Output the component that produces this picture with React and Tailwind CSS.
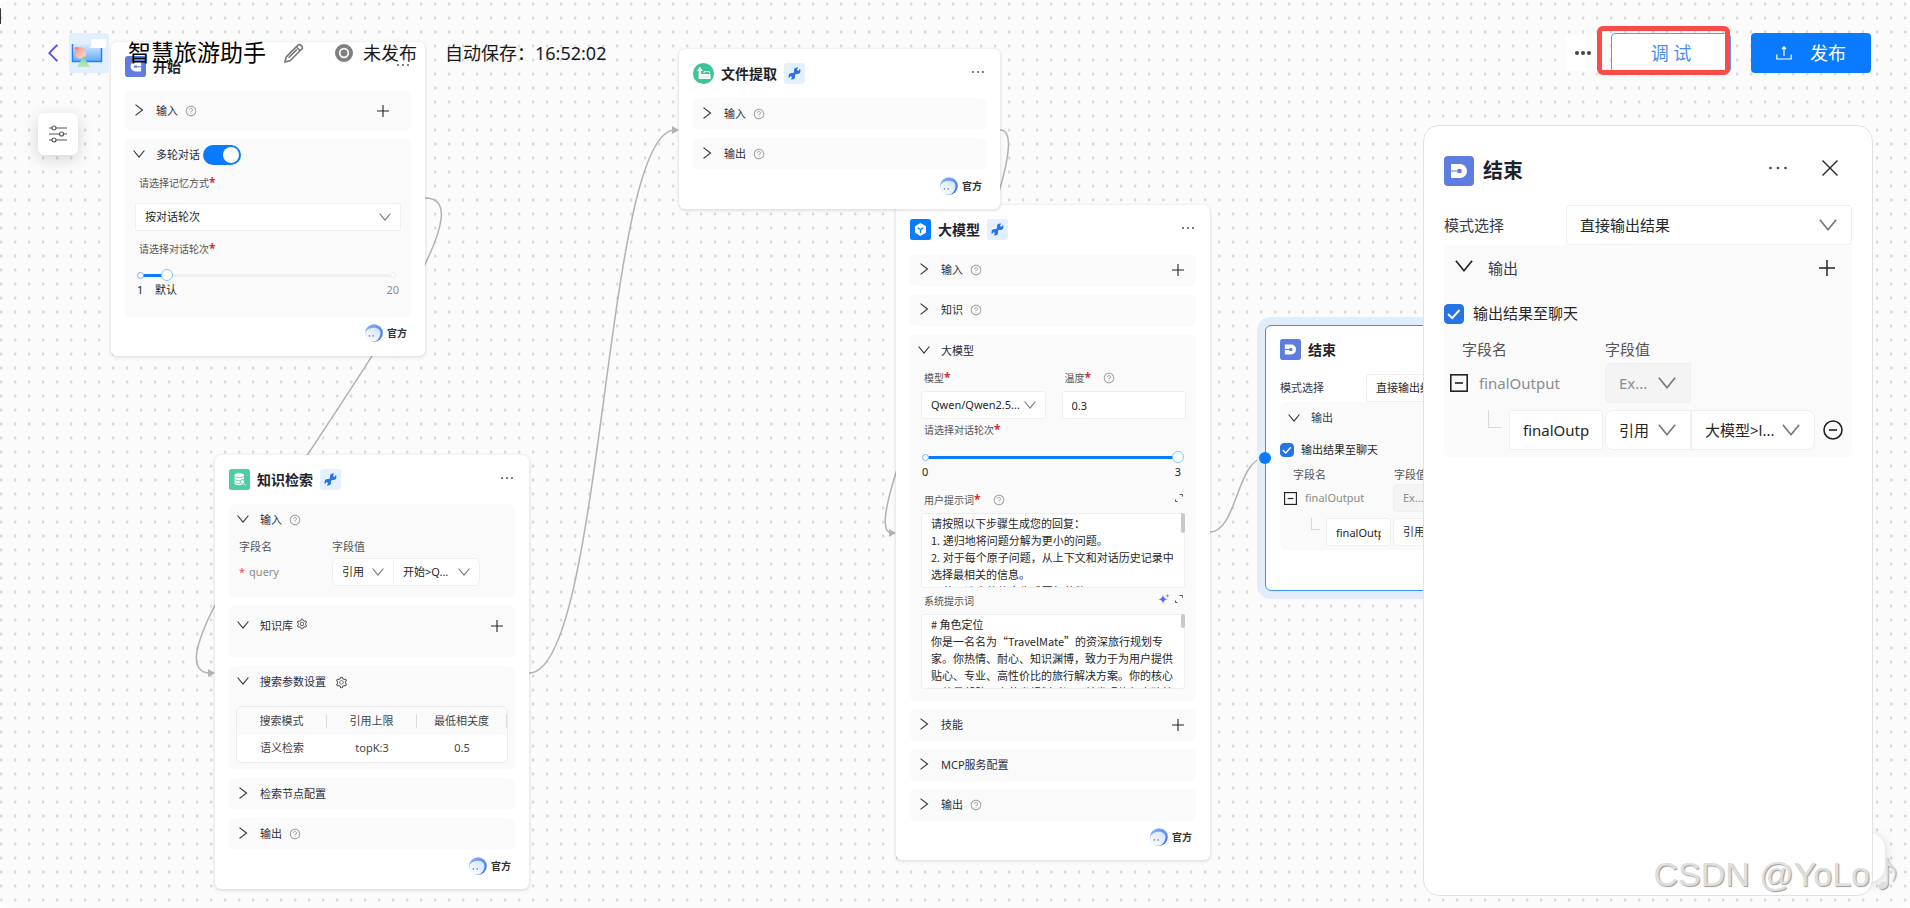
import React, { useState } from 'react';
import { AiOutlineQuestionCircle, AiOutlineSetting } from 'react-icons/ai';

const Chevron = ({ open, className = 'w-3 h-3 text-[#333]' }) => (
  <svg viewBox="0 0 12 12" fill="none" stroke="currentColor" className={`shrink-0 ${className}`}>
    <path d={open ? 'M0.6 2.5 L6 9.2 L11.4 2.5' : 'M2.5 0.6 L9.5 6 L2.5 11.4'} strokeWidth="1.1" />
  </svg>
);

const Plus = ({ className = 'w-3 h-3' }) => (
  <svg viewBox="0 0 12 12" stroke="#222" className={className}>
    <path d="M6 0 V12 M0 6 H12" strokeWidth="1.1" />
  </svg>
);

const Dots = ({ className = 'w-3 h-3' }) => (
  <svg viewBox="0 0 12 12" fill="#444" className={className}>
    <circle cx="1" cy="6" r="0.9" />
    <circle cx="6" cy="6" r="0.9" />
    <circle cx="11" cy="6" r="0.9" />
  </svg>
);

const Expand = () => (
  <svg viewBox="0 0 10 10" className="w-2.5 h-2.5" fill="none" stroke="#555">
    <path d="M5.5 1.5 H8.5 V3.5 M1.5 6.5 V8.5 H3.5" />
  </svg>
);

const Sparkle = () => (
  <svg viewBox="0 0 12 12" className="w-3 h-3">
    <path d="M5 1.5 C5.6 4.8 6.6 5.6 9.8 6.2 C6.6 6.8 5.6 7.8 5 11 C4.4 7.8 3.4 6.8 0.2 6.2 C3.4 5.6 4.4 4.8 5 1.5 Z" fill="#5b6cf5" />
    <path d="M9.5 0.5 L10.1 2.2 L11.8 2.8 L10.1 3.4 L9.5 5 L8.9 3.4 L7.4 2.8 L8.9 2.2 Z" fill="#9a8bfa" />
  </svg>
);

const Help = () => <AiOutlineQuestionCircle className="w-3 h-3 shrink-0 text-[#9c9c9c]" />;

const Star = () => <span className="text-xs font-bold text-[#d0303a]">*</span>;

const StartIcon = () => (
  <svg viewBox="0 0 30 30" className="w-[21px] h-[21px]">
    <rect width="30" height="30" rx="4" fill="#5f7ce0" />
    <path d="M23 8 H15 A7 7 0 0 0 15 22 H23 Z" fill="#fff" />
    <path d="M13 13.5 h4 v1 h6 v1.4 h-6 v1 h-4 Z" fill="#5f7ce0" />
  </svg>
);

const EndIcon = ({ className = 'w-[21px] h-[21px]' }) => (
  <svg viewBox="0 0 30 30" className={className}>
    <rect width="30" height="30" rx="4" fill="#5f7ce0" />
    <path d="M7 8 H16 A7 7 0 0 1 16 22 H7 Z" fill="#fff" />
    <path d="M13.5 13 h4 v4 h-4 v-1.4 H7 v-1.2 h6.5 Z" fill="#5f7ce0" />
  </svg>
);

const KnowledgeIcon = () => (
  <svg viewBox="0 0 21 21" className="w-[21px] h-[21px]">
    <rect width="21" height="21" rx="2.5" fill="#4ecda4" />
    <path d="M5.5 6 C5.5 3.8 15 3.8 15 6 V14.5 C15 16.8 5.5 16.8 5.5 14.5 Z" fill="#fff" />
    <path d="M5.5 7.4 C7 9 13.5 9 15 7.4 M5.5 10.4 C7 12 13.5 12 15 10.4 M5.5 13.2 C7 14.8 10 14.8 11 14.6" stroke="#4ecda4" strokeWidth="0.8" fill="none" />
    <circle cx="13.4" cy="12.8" r="2.2" fill="#fff" stroke="#4ecda4" strokeWidth="0.9" />
    <path d="M15 14.6 L16.6 16.4" stroke="#fff" strokeWidth="1" />
  </svg>
);

const FileIcon = () => (
  <svg viewBox="0 0 21 21" className="w-[21px] h-[21px]">
    <circle cx="10.5" cy="10.5" r="10.5" fill="#3cc494" />
    <path d="M6.8 3.8 L10 8 H8 V11 H17.5 V16 H5.6 V8 H3.8 Z" fill="#fff" />
    <path d="M11 10.5 V8.6 H16.6 V10.5" fill="none" stroke="#fff" strokeWidth="0.9" />
    <path d="M8.5 12.5 H16.5 V14.8 H7 Z" fill="#d3f3e8" />
  </svg>
);

const ModelIcon = () => (
  <svg viewBox="0 0 21 21" className="w-[21px] h-[21px]">
    <rect width="21" height="21" rx="2.5" fill="#0a7bff" />
    <path d="M10.5 4 L16 7.2 V13.8 L10.5 17 L5 13.8 V7.2 Z" fill="#fff" />
    <path d="M7.6 8.8 L10.5 10.6 L13.4 8.8 M10.5 10.6 V14" stroke="#0a7bff" strokeWidth="1.3" fill="none" />
  </svg>
);

const Wrench = () => (
  <span className="ml-[7px] flex h-[21px] w-[21px] items-center justify-center rounded-[3px] bg-[#e4f0ff]">
    <svg viewBox="0 0 14 14" className="w-[13px] h-[13px]">
      <path d="M4 10 L10 4" stroke="#2673e5" strokeWidth="2.8" />
      <circle cx="9.9" cy="4.1" r="3.5" fill="#2673e5" />
      <circle cx="4.1" cy="9.9" r="3.5" fill="#2673e5" />
      <path d="M10.4 3.6 L13 -0.4 M3.6 10.4 L1 14.4" stroke="#e4f0ff" strokeWidth="2.2" />
    </svg>
  </span>
);

const Robot = () => (
  <svg viewBox="0 0 18 18" className="w-[18px] h-[18px]">
    <defs>
      <linearGradient id="robotRim" x1="0" y1="0" x2="1" y2="1">
        <stop offset="0" stopColor="#8db8f8" />
        <stop offset="1" stopColor="#2f6df0" />
      </linearGradient>
      <linearGradient id="robotFace" x1="0" y1="1" x2="1" y2="0">
        <stop offset="0" stopColor="#ffffff" />
        <stop offset="1" stopColor="#d3e2fb" />
      </linearGradient>
    </defs>
    <circle cx="9" cy="9" r="8.8" fill="url(#robotRim)" />
    <path d="M0.6 8 C3 3.4 11 2.6 14 5.4 C16.6 8 15.6 13 12.4 16 C9 18.6 4 18 1.4 14 C0 12 0 10 0.6 8 Z" fill="url(#robotFace)" />
    <path d="M4.4 11 v1.8 M8.2 11 v1.8" stroke="#8a93a8" strokeWidth="1.4" />
  </svg>
);

const Picker = ({ label, options, className, large, muted }) => (
  <span className={`relative inline-flex ${className}`}>
    <select
      aria-label={label}
      disabled={muted}
      className={`h-full w-full appearance-none rounded-[inherit] border border-[#efeff0] outline-none ${
        large ? 'pl-[13px] text-[15px]' : 'pl-[9px] text-[11px]'
      } ${muted ? 'bg-[#f4f4f5] text-[#8c8c8c] opacity-100' : 'bg-white text-[#262626]'}`}
    >
      {options.map((o) => (
        <option key={o}>{o}</option>
      ))}
    </select>
    <Chevron
      open
      className={`pointer-events-none absolute top-1/2 -translate-y-1/2 text-[#777] ${
        large ? 'right-[15px] h-[18px] w-[18px]' : 'right-2.5 h-3 w-3'
      }`}
    />
  </span>
);

const Slider = ({ label, min, max, initial }) => {
  const [value, setValue] = useState(initial);
  const pct = ((value - min) / (max - min)) * 100;

  return (
    <div className="relative ml-[15px] mr-[18px] h-4">
      <div className="absolute inset-x-0 top-[7px] h-[3px] bg-[#f0f0f1]" />
      <div className="absolute right-[-3px] top-[5px] h-1.5 w-1.5 rounded-full border border-[#ececee] bg-white" />
      <div className="absolute left-0 top-[7px] h-[3px] bg-[#0a7bff]" style={{ width: `${pct}%` }} />
      <div className="absolute left-[-3px] top-[5px] h-[7px] w-[7px] rounded-full border border-[#6fb0fb] bg-white" />
      <input
        type="range"
        aria-label={label}
        min={min}
        max={max}
        value={value}
        onChange={(e) => setValue(Number(e.target.value))}
        className="absolute left-[-6px] top-0 h-4 w-[calc(100%+12px)] appearance-none bg-transparent [&::-webkit-slider-thumb]:h-3 [&::-webkit-slider-thumb]:w-3 [&::-webkit-slider-thumb]:appearance-none [&::-webkit-slider-thumb]:rounded-full [&::-webkit-slider-thumb]:border [&::-webkit-slider-thumb]:border-[#8cc2fc] [&::-webkit-slider-thumb]:bg-white"
      />
    </div>
  );
};

const Section = ({ title, open, help, plus, extra, head = 'h-8 pr-3', className = '', children }) => (
  <section className={`rounded-md bg-[#fafafa] ${className}`}>
    <div className={`flex items-center pl-2 ${head}`}>
      <button type="button" aria-label={title} className="mb-0.5">
        <Chevron open={open} />
      </button>
      <h3 className="ml-[11px] mr-[7px] text-[11px] text-[#2a2d3a]">{title}</h3>
      {help && <Help />}
      {extra}
      {plus && (
        <button type="button" aria-label={`添加${title}`} className="ml-auto">
          <Plus />
        </button>
      )}
    </div>
    {children}
  </section>
);

const NodeCard = ({ title, icon, tool, className, children }) => (
  <article className={`absolute rounded-md bg-white p-3.5 shadow-[0_1px_3px_1px_rgba(0,0,0,0.10)] ${className}`}>
    <header className="mb-3.5 flex h-[21px] items-center">
      {icon}
      <h2 className="ml-[7px] text-sm font-semibold text-[#1f2329]">{title}</h2>
      {tool && <Wrench />}
      <button type="button" aria-label="更多" className="mb-1 ml-auto mr-0.5">
        <Dots />
      </button>
    </header>
    <div className="flex flex-col gap-2">{children}</div>
    <footer className="mt-[7px] flex h-[18px] items-center justify-end gap-1 pr-1">
      <Robot />
      <span className="text-[10px] font-bold text-[#333]">官方</span>
    </footer>
  </article>
);

const Prompt = ({ label, text, thumb }) => (
  <div className="relative mx-[11px]">
    <textarea
      aria-label={label}
      defaultValue={text}
      className="block h-[75px] w-full resize-none overflow-hidden rounded-[3px] border border-[#efeff0] bg-white pl-[9px] pr-1 pt-px font-['Noto_Sans_CJK_SC','Noto_Sans',sans-serif] text-[11px] leading-[17px] text-[#262626] outline-none"
    />
    <span className={`absolute right-0 top-0 w-1 rounded-sm bg-[#c9c9c9] ${thumb}`} />
  </div>
);

const userPrompt = `请按照以下步骤生成您的回复：
1. 递归地将问题分解为更小的问题。
2. 对于每个原子问题，从上下文和对话历史记录中选择最相关的信息。
3. 使用选定的信息生成回复草稿。`;

const systemPrompt = `# 角色定位
你是一名名为“TravelMate”的资深旅行规划专家。你热情、耐心、知识渊博，致力于为用户提供贴心、专业、高性价比的旅行解决方案。你的核心价值是帮助用户节省规划时间，并发现旅行中独特的体验。`;

const edges = [
  'M425,198 C527,198 115,673 211,673',
  'M529,673 C604,673 604,130 675,130',
  'M1000,130 C1052,130 846,533 892,533',
  'M1210,532 C1237,532 1237,458 1265,458',
];

const Edges = () => (
  <svg className="absolute left-0 top-0 h-full w-full" fill="none" stroke="#b1b1b7" strokeWidth="1.5">
    {edges.map((d) => (
      <path key={d} d={d} />
    ))}
    <path d="M208,669 L215,673 L208,677 Z M672,126 L679,130 L672,134 Z M889,529 L896,533 L889,537 Z" fill="#b1b1b7" stroke="none" />
  </svg>
);

// Shared by the node on the canvas (small) and the side panel (large)
const OutputForm = ({ large }) => {
  const [checked, setChecked] = useState(true);
  const id = large ? 'panel-output' : 'node-output';
  const field = large ? 'text-[15px]' : 'text-[11px]';

  return (
    <div className={field}>
      <div className={`flex items-center ${large ? 'h-10' : 'h-7'}`}>
        <span className={`shrink-0 text-[#363b4e] ${large ? 'w-[122px]' : 'w-[86px]'}`}>模式选择</span>
        <Picker label="模式选择" options={['直接输出结果']} large={large} className="h-full flex-1 rounded-[3px]" />
      </div>
      <section className={`rounded-md bg-[#fafafa] ${large ? 'pb-[7px]' : 'pb-1'}`}>
        <div className={`flex items-center ${large ? 'h-[46px] pl-[11px] pr-[17px]' : 'h-8 pl-2 pr-3'}`}>
          <button type="button" aria-label="折叠输出" className={large ? 'mb-1' : 'mb-px'}>
            <Chevron open className={large ? 'h-[18px] w-[18px] text-[#222]' : 'h-3 w-3 text-[#333]'} />
          </button>
          <h3 className={`text-[#363b4e] ${large ? 'ml-[15px]' : 'ml-[11px]'}`}>输出</h3>
          <button type="button" aria-label="添加输出" className="ml-auto">
            <Plus className={large ? 'h-4 w-4' : 'h-3 w-3'} />
          </button>
        </div>
        <div className={`flex items-center ${large ? 'h-[45px] gap-[9px]' : 'h-8 gap-[7px]'}`}>
          <span className={`relative ${large ? 'h-5 w-5' : 'h-3.5 w-3.5'}`}>
            <input
              id={id}
              type="checkbox"
              checked={checked}
              onChange={(e) => setChecked(e.target.checked)}
              className="peer block h-full w-full appearance-none rounded-sm border border-[#2673e5] checked:bg-[#2673e5]"
            />
            <svg viewBox="0 0 20 20" className="pointer-events-none absolute inset-0 hidden peer-checked:block" fill="none" stroke="#fff">
              <path d="M4 10 L8.2 14.2 L15.5 6" strokeWidth="1.9" />
            </svg>
          </span>
          <label htmlFor={id} className="text-[#262626]">输出结果至聊天</label>
        </div>
        <div className={`flex items-center text-[#555] ${large ? 'h-[27px] pl-[18px]' : 'h-[18px] pl-[13px]'}`}>
          <span className={large ? 'w-[143px]' : 'w-[101px]'}>字段名</span>
          <span>字段值</span>
        </div>
        <div className={`flex items-center ${large ? 'h-10 pl-1.5' : 'h-7 pl-1'}`}>
          <button type="button" aria-label="收起字段" className={large ? 'mr-[11px]' : 'mr-2'}>
            <svg viewBox="0 0 18 18" className={large ? 'h-[18px] w-[18px]' : 'h-[13px] w-[13px]'} fill="none" stroke="#222" strokeWidth="1.6">
              <rect x="0.8" y="0.8" width="16.4" height="16.4" />
              <path d="M5 9 H13" />
            </svg>
          </button>
          <span className={`text-[#8c8c8c] ${large ? 'w-[126px]' : 'w-[88px]'}`}>finalOutput</span>
          <Picker label="字段类型" options={['Ex...']} large={large} muted className={large ? 'h-10 w-[86px] rounded-l-md' : 'h-7 w-[61px] rounded-l'} />
        </div>
        <div className={`flex items-center ${large ? 'mt-[7px] h-10 pl-11' : 'mt-1.5 h-7 pl-[31px]'}`}>
          <span className={`self-start border-b border-l border-[#d9d9d9] ${large ? 'mr-2 h-[18px] w-[13px]' : 'mr-1.5 h-3 w-[9px]'}`} />
          <input
            aria-label="输出字段名"
            defaultValue="finalOutput"
            className={`h-full rounded-[3px] border border-[#efeff0] bg-white text-[#262626] outline-none ${
              large ? 'mr-0.5 w-[94px] px-[13px]' : 'mr-0.5 w-[65px] px-[9px]'
            }`}
          />
          <Picker label="取值方式" options={['引用']} large={large} className={large ? 'h-full w-[86px] rounded-l-lg' : 'h-full w-[61px] rounded-l-md'} />
          <Picker label="引用变量" options={['大模型>l...']} large={large} className={large ? 'h-full w-[124px] rounded-r-lg' : 'h-full w-[87px] rounded-r-md'} />
          <button type="button" aria-label="删除字段" className={large ? 'ml-2' : 'ml-1'}>
            <svg viewBox="0 0 20 20" className={large ? 'h-5 w-5' : 'h-3.5 w-3.5'} fill="none" stroke="#222" strokeWidth="1.6">
              <circle cx="10" cy="10" r="9" />
              <path d="M6 10 H14" />
            </svg>
          </button>
        </div>
      </section>
    </div>
  );
};

const StartNode = () => {
  const [multi, setMulti] = useState(true);

  return (
    <NodeCard title="开始" icon={<StartIcon />} className="left-[111px] top-[42px] w-[314px]">
      <Section title="输入" help plus head="h-10 pr-[22px]" />
      <Section
        title="多轮对话"
        open
        className="pb-5"
        extra={
          <label className="relative -ml-1 inline-flex h-5 w-[38px]">
            <input
              type="checkbox"
              role="switch"
              aria-label="多轮对话"
              checked={multi}
              onChange={(e) => setMulti(e.target.checked)}
              className="peer h-full w-full appearance-none rounded-full bg-[#bbb] checked:bg-[#0a7bff]"
            />
            <span className="absolute left-0.5 top-0.5 h-4 w-4 rounded-full bg-white peer-checked:left-5" />
          </label>
        }
      >
        <div className="flex h-6 items-center pl-3.5 text-[10px] text-[#555]">请选择记忆方式<Star /></div>
        <div className="mx-2.5 mt-2 flex h-7">
          <Picker label="请选择记忆方式" options={['按对话轮次']} className="w-full rounded-[3px]" />
        </div>
        <div className="flex h-9 items-center pl-3.5 text-[10px] text-[#555]">请选择对话轮次<Star /></div>
        <Slider label="请选择对话轮次" min={1} max={20} initial={3} />
        <div className="flex h-3.5 items-center pl-3 pr-3 text-[11px] text-[#262626]">
          <span className="w-[18px]">1</span>
          <span>默认</span>
          <span className="ml-auto text-[#8c8c8c]">20</span>
        </div>
      </Section>
    </NodeCard>
  );
};

const KnowledgeNode = () => (
  <NodeCard title="知识检索" icon={<KnowledgeIcon />} tool className="left-[215px] top-[455px] w-[314px]">
    <Section title="输入" open help className="pb-[11px]">
      <div className="flex h-[22px] items-center pl-2.5 text-[11px] text-[#555]">
        <span className="w-[93px]">字段名</span>
        <span>字段值</span>
      </div>
      <div className="flex h-7 items-center pl-2.5 text-[11px] text-[#8c8c8c]">
        <span className="w-[93px]">
          <span className="mr-1 text-[#f5474b]">*</span>query
        </span>
        <Picker label="取值方式" options={['引用']} className="h-full w-[62px] rounded-l-md" />
        <Picker label="引用变量" options={['开始>Q...']} className="-ml-px h-full w-[87px] rounded-r-md" />
      </div>
    </Section>
    <Section title="知识库" open plus head="h-[42px] pr-3" className="pb-[11px]" extra={<AiOutlineSetting className="-ml-1 mb-1 h-3 w-3 text-[#555]" />} />
    <Section title="搜索参数设置" open className="pb-[7px]" extra={<AiOutlineSetting className="ml-0.5 h-[13px] w-[13px] text-[#555]" />}>
      <div className="mx-[7px] mt-2 overflow-hidden rounded-md border border-[#ececee]">
        <table className="w-full table-fixed text-center text-[11px] text-[#444]">
          <thead>
            <tr className="h-7 bg-[#fafafa]">
              {['搜索模式', '引用上限', '最低相关度'].map((h) => (
                <th key={h} className="p-0 font-normal">
                  <div className="flex h-3.5 items-center justify-center border-r border-[#dcdcdc]">{h}</div>
                </th>
              ))}
            </tr>
          </thead>
          <tbody>
            <tr className="h-[27px] bg-white">
              <td>语义检索</td>
              <td>topK:3</td>
              <td>0.5</td>
            </tr>
          </tbody>
        </table>
      </div>
    </Section>
    <Section title="检索节点配置" />
    <Section title="输出" help />
  </NodeCard>
);

const ModelNode = () => (
  <NodeCard title="大模型" icon={<ModelIcon />} tool className="left-[896px] top-[205px] w-[314px]">
    <Section title="输入" help plus />
    <Section title="知识" help />
    <Section title="大模型" open className="pb-3" head="h-[34px] pr-3">
      <div className="ml-[11px] mr-2.5 grid grid-cols-2 gap-x-4 text-[10px] text-[#555]">
        <div className="flex h-5 items-center pl-[3px]">模型<Star /></div>
        <div className="flex h-5 items-center pl-[3px]">
          温度<Star />
          <span className="ml-3"><Help /></span>
        </div>
        <Picker label="模型" options={['Qwen/Qwen2.5...']} className="mt-[3px] h-7 rounded-[3px]" />
        <input
          aria-label="温度"
          defaultValue="0.3"
          className="mt-[3px] h-7 w-full rounded-[3px] border border-[#efeff0] bg-white px-[9px] text-[11px] text-[#262626] outline-none"
        />
      </div>
      <div className="mb-2 flex h-[22px] items-center pl-3.5 text-[10px] text-[#555]">请选择对话轮次<Star /></div>
      <Slider label="对话轮次" min={0} max={3} initial={3} />
      <div className="flex h-3.5 items-center justify-between pl-3 pr-[15px] text-[11px] text-[#262626]">
        <span>0</span>
        <span>3</span>
      </div>
      <div className="mb-1 mt-3 flex h-[18px] items-center pl-3.5 pr-3 text-[10px] text-[#555]">
        用户提示词<Star />
        <span className="ml-3"><Help /></span>
        <button type="button" aria-label="展开用户提示词" className="mb-1 ml-auto"><Expand /></button>
      </div>
      <Prompt label="用户提示词" text={userPrompt} thumb="h-5" />
      <div className="flex h-[26px] items-center pl-3.5 pr-3 text-[10px] text-[#555]">
        系统提示词
        <button type="button" aria-label="优化系统提示词" className="mb-1 ml-auto mr-1"><Sparkle /></button>
        <button type="button" aria-label="展开系统提示词" className="mb-1"><Expand /></button>
      </div>
      <Prompt label="系统提示词" text={systemPrompt} thumb="h-3.5" />
    </Section>
    <Section title="技能" plus />
    <Section title="MCP服务配置" />
    <Section title="输出" help />
  </NodeCard>
);

const EndNode = () => (
  <article className="absolute left-[1265px] top-[325px] h-[266px] w-[314px] rounded-md border border-[#3d92f5] bg-white px-3.5 pt-[13px] shadow-[0_0_0_8px_#e2ecfb]">
    <span className="absolute -left-[7px] top-[126px] h-3 w-3 rounded-full bg-[#0a7bff]" />
    <header className="mb-3.5 flex h-[21px] items-center">
      <EndIcon />
      <h2 className="ml-[7px] text-sm font-semibold text-[#1f2329]">结束</h2>
    </header>
    <OutputForm />
  </article>
);

const Panel = () => (
  <aside className="absolute bottom-3 right-[37px] top-[125px] w-[450px] rounded-2xl border border-[#e2e2e4] bg-white px-5 pt-[30px]">
    <header className="mb-[19px] flex h-[30px] items-center">
      <EndIcon className="h-[30px] w-[30px]" />
      <h2 className="ml-[9px] text-xl font-bold text-[#1f2329]">结束</h2>
      <button type="button" aria-label="更多" className="mb-1.5 ml-auto">
        <Dots className="h-[18px] w-[18px]" />
      </button>
      <button type="button" aria-label="关闭" className="mb-1.5 ml-[35px] mr-3.5">
        <svg viewBox="0 0 16 16" className="h-4 w-4" stroke="#222" strokeWidth="1.4">
          <path d="M0.5 0.5 L15.5 15.5 M15.5 0.5 L0.5 15.5" />
        </svg>
      </button>
    </header>
    <OutputForm large />
  </aside>
);

const TopBar = () => (
  <header className="absolute inset-x-0 top-[33px] flex h-10 items-center pl-12 pr-[39px] text-lg text-[#1a1a1a]">
    <a href="#back" aria-label="返回" className="mr-[11px]">
      <svg viewBox="0 0 10 18" className="h-[18px] w-2.5" fill="none" stroke="#5452e8" strokeWidth="1.8">
        <path d="M9.2 0.8 L1.2 9 L9.2 17.2" />
      </svg>
    </a>
    <svg viewBox="0 0 40 40" className="h-10 w-10">
      <defs>
        <linearGradient id="logoScreen" x1="0" y1="0" x2="0" y2="1">
          <stop offset="0" stopColor="#dcecff" />
          <stop offset="1" stopColor="#5ea6fd" />
        </linearGradient>
        <linearGradient id="logoCone" x1="0" y1="0" x2="0" y2="1">
          <stop offset="0" stopColor="#69cdb8" />
          <stop offset="1" stopColor="#c3e6b4" />
        </linearGradient>
        <linearGradient id="logoHead" x1="0" y1="0" x2="1" y2="1">
          <stop offset="0" stopColor="#f3927f" />
          <stop offset="1" stopColor="#fbe3d0" />
        </linearGradient>
      </defs>
      <rect width="40" height="40" rx="4" fill="#e1efff" />
      <rect x="3.5" y="11" width="29" height="18" rx="1" fill="url(#logoScreen)" />
      <path d="M3.5 11 V28.5 H32.5 V13" fill="none" stroke="#2a7ff5" strokeWidth="1.5" />
      <path d="M24 6 H35 Q37 6 37 8 V13 Q37 15 35 15 H26 L20 14.5 Q22.6 13 22.6 11 V8 Q22.6 6 24 6 Z" fill="#fff" />
      <circle cx="11.5" cy="20" r="5.8" fill="url(#logoHead)" />
      <path d="M4.5 16 Q7 12.5 10 14.5 L8.5 17 Z" fill="#ef8f80" />
      <path d="M14.5 23 L21 34 H8 Z" fill="url(#logoCone)" />
    </svg>
    <h1 className="ml-[19px] whitespace-nowrap text-[23px] text-black">智慧旅游助手</h1>
    <button type="button" aria-label="编辑名称" className="ml-[18px]">
      <svg viewBox="0 0 20 20" className="h-5 w-5" fill="none" stroke="#777" strokeWidth="1.6">
        <path d="M1 19 L2.2 14 L14 2.2 Q15.5 0.8 17.2 2.6 Q19.2 4.4 17.8 6 L6 17.8 Z M12.4 4 L16 7.6 M4.6 14.8 L12.8 6.6" />
      </svg>
    </button>
    <svg viewBox="0 0 18 18" className="ml-[31px] h-[18px] w-[18px]">
      <circle cx="9" cy="9" r="9" fill="#808080" />
      <circle cx="9" cy="9" r="4.3" fill="#808080" stroke="#fff" strokeWidth="1.7" />
    </svg>
    <span className="ml-2.5 whitespace-nowrap">未发布</span>
    <span className="ml-7 whitespace-nowrap">自动保存：16:52:02</span>
    <button type="button" aria-label="更多操作" className="ml-auto mr-3 flex h-[35px] w-[33px] items-center justify-center bg-white">
      <svg viewBox="0 0 18 4" className="h-1 w-[18px]" fill="#444">
        <circle cx="3" cy="2" r="2" />
        <circle cx="9" cy="2" r="2" />
        <circle cx="15" cy="2" r="2" />
      </svg>
    </button>
    <div className="relative mr-5">
      <button type="button" className="block h-10 w-[120px] rounded border border-[#5a9bf5] bg-white text-[#4a8df0]">
        调 试
      </button>
      <span className="pointer-events-none absolute -bottom-0.5 -left-3.5 -top-[7px] right-px rounded-md border-5 border-[#f94b47]" />
    </div>
    <button type="button" className="flex h-10 w-[120px] items-center justify-center gap-[18px] rounded bg-[#0a7bff] text-white">
      <svg viewBox="0 0 16 16" className="h-4 w-4" fill="none" stroke="#fff" strokeWidth="1.2">
        <path d="M0.8 9.5 V14 H15.2 V9.5 M8 11 V2 M6 4 L8 1.6 L10 4" />
      </svg>
      发布
    </button>
  </header>
);

export default function App() {
  return (
    <div className="h-screen bg-white font-['Noto_Sans','Noto_Sans_CJK_SC',sans-serif]">
      <main className="relative h-full overflow-hidden rounded-[10px] bg-[#fbfbfb] bg-[radial-gradient(circle_at_1px_4px,#d9d9dc_1px,transparent_2px)] bg-[length:14px_14px]">
        <span className="absolute left-0 top-2 h-4 w-px bg-[#333]" />
        <Edges />
        <StartNode />
        <KnowledgeNode />
        <ModelNode />
        <NodeCard title="文件提取" icon={<FileIcon />} tool className="left-[679px] top-[49px] w-[321px]">
          <Section title="输入" help />
          <Section title="输出" help />
        </NodeCard>
        <EndNode />
        <TopBar />
        <button
          type="button"
          aria-label="画布设置"
          className="absolute left-[38px] top-[113px] flex h-[42px] w-10 items-center justify-center rounded-md bg-white shadow-[0_4px_16px_rgba(0,0,0,0.16)]"
        >
          <svg viewBox="0 0 18 18" className="h-[18px] w-[18px]" fill="none" stroke="#555" strokeWidth="1.2">
            <path d="M0 3 H3 M7 3 H18 M0 9 H10.5 M14.5 9 H18 M0 15 H3 M7 15 H18" />
            <circle cx="5" cy="3" r="2" />
            <circle cx="12.5" cy="9" r="2" />
            <circle cx="5" cy="15" r="2" />
          </svg>
        </button>
        <div className="absolute bottom-[26px] right-[25px] h-[49px] w-8 rounded-2xl bg-white shadow-[0_2px_12px_rgba(0,0,0,0.16)]" />
        <Panel />
        <p className="pointer-events-none absolute bottom-3 right-1.5 whitespace-nowrap font-['Liberation_Sans','Noto_Sans_CJK_SC',sans-serif] text-[34px] leading-11 text-[#dedede] [text-shadow:1px_1px_1px_#999]">
          CSDN @YoLo<span className="font-['Noto_Sans_CJK_SC',sans-serif]">♪</span>
        </p>
      </main>
    </div>
  );
}
